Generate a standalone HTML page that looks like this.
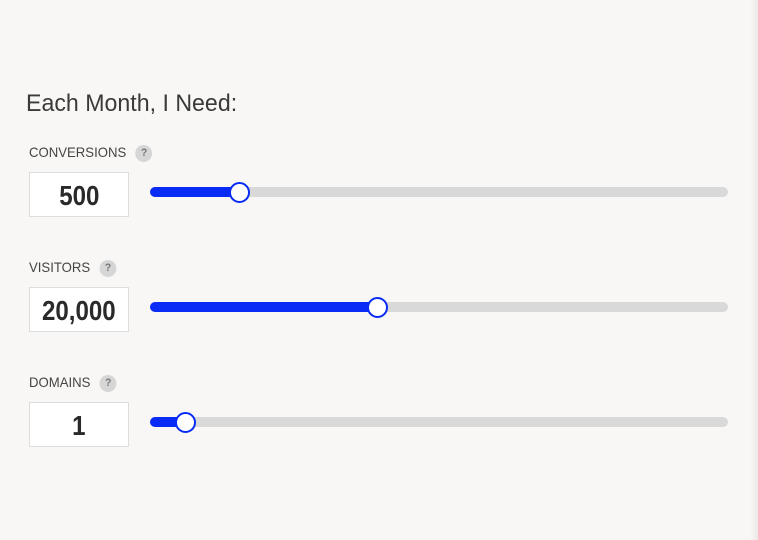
<!DOCTYPE html>
<html><head><style>
body{margin:0;width:758px;height:540px;background:#f8f7f5;position:relative;overflow:hidden;font-family:"Liberation Sans",sans-serif;color:#333}
.edge{position:absolute;right:0;top:0;width:8px;height:540px;background:linear-gradient(to right,#f8f7f5,#ebe9e7)}
h1{position:absolute;left:26px;top:90px;margin:0;font-weight:normal;font-size:24px;color:#3a3a3a;transform:scaleX(0.965);transform-origin:left}
.lbl{position:absolute;left:29px;font-size:14px;color:#444;transform:scaleX(0.94);transform-origin:left;white-space:nowrap}
.q{display:inline-block;width:18px;height:17px;border-radius:50%;background:#d6d6d6;color:#777;font-size:11px;text-align:center;line-height:17px;margin-left:10px;vertical-align:middle;font-weight:bold}
.box{position:absolute;left:29px;width:98px;height:43px;background:#fff;border:1px solid #ddd;text-align:center;line-height:45px;color:#2a2a2a}
.box span{display:inline-block;font-size:28px;font-weight:bold;transform:scaleX(0.86)}
.track{position:absolute;left:150px;width:578px;height:10px;border-radius:5px;background:#d9d9d9}
.fill{position:absolute;left:0;top:0;height:10px;border-radius:5px;background:#0a2bf5}
.thumb{position:absolute;top:-5px;width:17px;height:17px;border-radius:50%;background:#fff;border:2px solid #0a2bf5}
</style></head><body>
<div class="edge"></div>
<h1>Each Month, I Need:</h1>

<div class="lbl" style="top:144px">CONVERSIONS<span class="q">?</span></div>
<div class="box" style="top:172px"><span>500</span></div>
<div class="track" style="top:187px"><div class="fill" style="width:90px"></div><div class="thumb" style="left:79px"></div></div>

<div class="lbl" style="top:259px">VISITORS<span class="q">?</span></div>
<div class="box" style="top:287px"><span>20,000</span></div>
<div class="track" style="top:302px"><div class="fill" style="width:228px"></div><div class="thumb" style="left:217px"></div></div>

<div class="lbl" style="top:374px">DOMAINS<span class="q">?</span></div>
<div class="box" style="top:402px"><span>1</span></div>
<div class="track" style="top:417px"><div class="fill" style="width:36px"></div><div class="thumb" style="left:25px"></div></div>
</body></html>
